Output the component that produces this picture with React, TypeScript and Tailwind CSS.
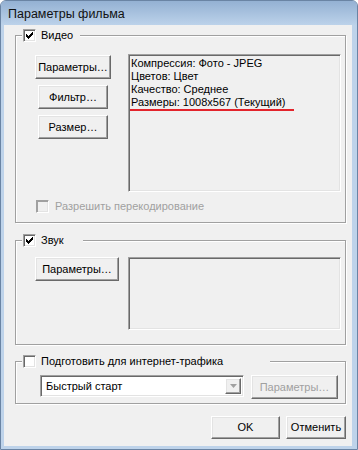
import type { ReactNode } from "react";

const FONT = "font-['Liberation_Sans',Arial,sans-serif]";
const RAISED =
  "border border-b-[#696969] border-l-white border-r-[#696969] border-t-white bg-[#f0f0f0] shadow-[inset_-1px_-1px_0_#a0a0a0,inset_1px_1px_0_#e3e3e3]";
const SUNKEN =
  "border border-b-white border-l-[#a0a0a0] border-r-white border-t-[#a0a0a0] shadow-[inset_1px_1px_0_#696969,inset_-1px_-1px_0_#e3e3e3]";

function CheckBox({ checked = false, disabled = false }: { checked?: boolean; disabled?: boolean }) {
  return (
    <span
      className={`flex h-[13px] w-[13px] shrink-0 items-center justify-center border border-b-white border-l-[#a0a0a0] border-r-white border-t-[#a0a0a0] ${
        disabled
          ? "bg-[#f0f0f0] shadow-[inset_1px_1px_0_#a0a0a0,inset_-1px_-1px_0_#e3e3e3]"
          : "bg-white shadow-[inset_1px_1px_0_#696969,inset_-1px_-1px_0_#e3e3e3]"
      }`}
    >
      {checked && <CheckMark />}
    </span>
  );
}

function CheckMark() {
  return (
    <svg width="7" height="7" viewBox="0 0 7 7" shapeRendering="crispEdges" fill="#000">
      <rect x="6" y="0" width="1" height="1" />
      <rect x="5" y="1" width="2" height="1" />
      <rect x="0" y="2" width="1" height="1" />
      <rect x="4" y="2" width="3" height="1" />
      <rect x="0" y="3" width="2" height="1" />
      <rect x="3" y="3" width="3" height="1" />
      <rect x="0" y="4" width="5" height="1" />
      <rect x="1" y="5" width="3" height="1" />
      <rect x="2" y="6" width="1" height="1" />
    </svg>
  );
}

function Button({
  children,
  className = "",
  disabled = false,
}: {
  children: ReactNode;
  className?: string;
  disabled?: boolean;
}) {
  return (
    <button
      type="button"
      className={`flex shrink-0 items-center justify-center whitespace-nowrap ${RAISED} ${
        disabled ? "text-[#a0a0a0]" : "text-black"
      } ${className}`}
    >
      {children}
    </button>
  );
}

function Group({
  label,
  legendWidth,
  checked = false,
  className = "",
  children,
}: {
  label: string;
  legendWidth: string;
  checked?: boolean;
  className?: string;
  children: ReactNode;
}) {
  return (
    <fieldset
      className={`border border-[#a0a0a0] shadow-[inset_1px_1px_0_#fff,1px_1px_0_#fff] ${className}`}
    >
      <legend className={`ml-[6px] flex items-center bg-[#f0f0f0] pl-[1px] ${legendWidth}`}>
        <CheckBox checked={checked} />
        <span className="ml-[5px] whitespace-nowrap">{label}</span>
      </legend>
      {children}
    </fieldset>
  );
}

export default function App() {
  return (
    <div className={`h-[450px] w-[358px] ${FONT} text-[11px] leading-[13px] text-black`}>
      <div className="flex h-full flex-col rounded-t-[6px] border border-[#6a84a4] bg-[#bed3ea]">
        <div className="flex h-[24px] items-center rounded-t-[5px] bg-gradient-to-b from-[#94b1d3] to-[#bcd2ea] pl-[7px] pt-[2px] text-[12.5px] text-[#111]">
          Параметры фильма
        </div>

        <div className="mb-[3px] ml-[3px] mr-[5px] flex flex-1 flex-col bg-[#f0f0f0] pl-[11px] pr-[6px] pt-[4px]">
          <Group label="Видео" legendWidth="w-[58px]" checked>
            <div className="pb-[9px] pl-[19px] pr-[4px] pt-[12px]">
              <div className="flex gap-[17px]">
                <div className="flex w-[76px] flex-col items-center gap-[6px] pt-[1px]">
                  <Button className="h-[24px] w-[76px]">Параметры…</Button>
                  <Button className="h-[24px] w-[70px]">Фильтр…</Button>
                  <Button className="h-[24px] w-[70px]">Размер…</Button>
                </div>
                <div className={`h-[138px] w-[213px] px-[2px] pt-[2px] ${SUNKEN}`}>
                  <div>Компрессия: Фото - JPEG</div>
                  <div>Цветов: Цвет</div>
                  <div>Качество: Среднее</div>
                  <div>Размеры: 1008x567 (Текущий)</div>
                  <div className="-ml-[1px] h-[2px] w-[164px] bg-[#e3242b]" />
                </div>
              </div>
              <div className="mt-[8px] flex items-center pl-[1px]">
                <CheckBox disabled />
                <span className="ml-[6px] text-[#a0a0a0]">Разрешить перекодирование</span>
              </div>
            </div>
          </Group>

          <Group label="Звук" legendWidth="w-[61px]" checked className="mt-[11px]">
            <div className="flex gap-[9px] pb-[14px] pl-[19px] pr-[4px] pt-[10px]">
              <Button className="h-[24px] w-[84px]">Параметры…</Button>
              <div className={`h-[73px] w-[213px] ${SUNKEN}`} />
            </div>
          </Group>

          <Group label="Подготовить для интернет-трафика" legendWidth="w-[248px]" className="mt-[10px]">
            <div className="flex items-start gap-[7px] pb-[4px] pl-[24px] pr-[6px] pt-[7px]">
              <div className={`flex h-[22px] w-[204px] items-center bg-white p-[2px] ${SUNKEN}`}>
                <span className="flex-1 pl-[3px]">Быстрый старт</span>
                <span className={`flex h-full w-[16px] items-center justify-center ${RAISED}`}>
                  <svg width="7" height="4" viewBox="0 0 7 4">
                    <path d="M0 0h7L3.5 4z" fill="#a0a0a0" />
                  </svg>
                </span>
              </div>
              <Button disabled className="h-[24px] w-[87px]">
                Параметры…
              </Button>
            </div>
          </Group>

          <div className="mt-[12px] flex justify-end gap-[6px]">
            <Button className="h-[23px] w-[69px]">OK</Button>
            <Button className="h-[23px] w-[60px]">Отменить</Button>
          </div>
        </div>
      </div>
    </div>
  );
}
